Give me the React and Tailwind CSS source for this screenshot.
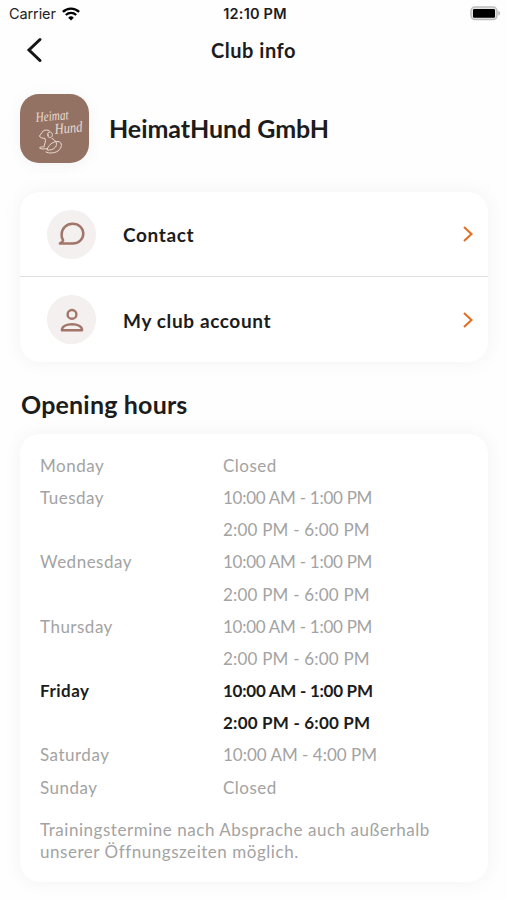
const hours = [
  { day: "Monday", times: ["Closed"] },
  { day: "Tuesday", times: ["10:00 AM - 1:00 PM", "2:00 PM - 6:00 PM"] },
  { day: "Wednesday", times: ["10:00 AM - 1:00 PM", "2:00 PM - 6:00 PM"] },
  { day: "Thursday", times: ["10:00 AM - 1:00 PM", "2:00 PM - 6:00 PM"] },
  { day: "Friday", times: ["10:00 AM - 1:00 PM", "2:00 PM - 6:00 PM"], today: true },
  { day: "Saturday", times: ["10:00 AM - 4:00 PM"] },
  { day: "Sunday", times: ["Closed"] },
];

const tracking = (time) => {
  if (time === "Closed") return "tracking-[0.5px]";
  if (time.includes("- 1:")) return "tracking-[-0.27px]";
  if (time.startsWith("10")) return "tracking-normal";
  return "tracking-[0.2px]";
};

const WifiIcon = () => (
  <svg width="18" height="14" viewBox="0 0 18 14" fill="none" stroke="#000">
    <path d="M0.9 4.9a11.6 11.6 0 0 1 16.2 0" strokeWidth="2.4" />
    <path d="M3.8 8a7.5 7.5 0 0 1 10.4 0" strokeWidth="2.3" />
    <path d="M9 13.6 6.2 10.7a4 4 0 0 1 5.6 0z" fill="#000" stroke="none" />
  </svg>
);

const BatteryIcon = () => (
  <svg width="31" height="15" viewBox="0 0 31 15">
    <rect x="1" y="1" width="26" height="12.6" rx="4" fill="#e4e4e4" stroke="#bdbdbd" strokeWidth="1.5" />
    <rect x="3" y="3" width="22" height="8.8" rx="1.2" fill="#000" />
    <path d="M28.4 5c2.2.7 2.2 3.9 0 4.6z" fill="#b5b5b5" />
  </svg>
);

const ClubLogo = () => (
  <svg width="69" height="69" viewBox="0 0 69 69" className="rounded-[19px] bg-[#937264]">
    <g fill="#eadbd0" fontFamily="Liberation Serif, serif" fontStyle="italic">
      <text x="16" y="28" fontSize="14" textLength="33" lengthAdjust="spacingAndGlyphs" transform="rotate(-5 16 28)">
        Heimat
      </text>
      <text x="35" y="40" fontSize="15" textLength="28" lengthAdjust="spacingAndGlyphs" transform="rotate(-5 35 40)">
        Hund
      </text>
    </g>
    <g fill="none" stroke="#eadbd0" strokeWidth="1" strokeLinecap="round" strokeLinejoin="round">
      <path d="M28 41.5c-1-2 0-4 2.500-3.500 2.500.6 2.500 5 0 5.500-2 .3-3-1-2.500-3M29 36.500c-3-1-6-.5-7 2-.6 1.500-2 2-2.500 3.500.5 2 3 2 5.500 2.500 1.500 3-1 6-1 8.500-1.500 0-4-.5-4.500 1 2 1.500 5 1 8 .5" />
      <path d="M32 44.500c3.500 1.500 6 5 3.500 8.500-2 2.500-5.500 3.500-8.500 3 1-4.500 6-9 11-8.500 5 .7 4 6.500 0 9.500-4 2.500-9 2.500-12 1" />
    </g>
  </svg>
);

const ContactIcon = () => (
  <svg width="28" height="26" viewBox="0 0 28 26" fill="none" stroke="#a17569" strokeWidth="2.5" strokeLinejoin="round">
    <path d="M1.900 22.500c1.800-.8 3-2 3.200-3.300a10 9.500 0 0 1-1.500-5.500c0-6.200 4.900-10.900 11-10.900s10.700 4.200 10.700 9.800-4.600 9.900-10.700 9.900z" />
  </svg>
);

const AccountIcon = () => (
  <svg width="26" height="26" viewBox="0 0 26 26" fill="none" stroke="#a17569" strokeWidth="2.4">
    <circle cx="13" cy="7.4" r="4.4" />
    <path d="M2.900 23.200c0-4 4.600-5.900 10.100-5.900s10.100 1.900 10.100 5.900z" strokeLinejoin="round" />
  </svg>
);

const MenuRow = ({ icon, label }) => (
  <button className="flex h-[85px] w-full items-center pr-[14px] pl-[27px] text-left">
    <span className="flex size-[49px] items-center justify-center rounded-full bg-[#f3f0ef]">
      {icon}
    </span>
    <span className="ml-[27px] flex-1 pt-[3px] text-[19px] font-bold tracking-[0.62px]">
      {label}
    </span>
    <svg width="12" height="18" viewBox="0 0 12 18" fill="none" stroke="#df7026" strokeWidth="2.1">
      <path d="M2 2l7.5 7L2 16" />
    </svg>
  </button>
);

const App = () => {
  return (
    <div className="flex h-[900px] w-full flex-col overflow-hidden bg-[#fefefe] font-[Lato,sans-serif] text-[#1c1c1c]">
      <div className="grid h-[27px] grid-cols-3 items-center pr-[6px] pl-[9px] font-[Inter,sans-serif]">
        <div className="flex items-center gap-[6px] text-[14.5px] tracking-[-0.1px] text-[#222]">
          Carrier
          <WifiIcon />
        </div>
        <div className="text-center text-[14.5px] font-semibold tracking-[0.2px] whitespace-nowrap">
          12:10 PM
        </div>
        <div className="flex justify-end">
          <BatteryIcon />
        </div>
      </div>

      <div className="mt-px grid h-11 grid-cols-3 items-center">
        <button className="pl-[26px]">
          <svg width="18" height="26" viewBox="0 0 18 26" fill="none" stroke="#161616" strokeWidth="3" strokeLinecap="round">
            <path d="M14 2.5 3 13l11 10.5" />
          </svg>
        </button>
        <h1 className="text-center text-[20px] font-bold tracking-[0.55px]">Club info</h1>
      </div>

      <div className="mt-[22px] ml-5 flex items-center gap-5">
        <div className="rounded-[19px] shadow-[0_2px_16px_rgba(0,0,0,0.05)]">
          <ClubLogo />
        </div>
        <h2 className="text-[25px] font-bold tracking-[-0.05px]">HeimatHund GmbH</h2>
      </div>

      <div className="mt-[29px] mr-[19px] ml-5 divide-y divide-[#e0e0e0] rounded-[20px] bg-white shadow-[0_0_20px_rgba(0,0,0,0.05)]">
        <MenuRow icon={<ContactIcon />} label="Contact" />
        <MenuRow icon={<AccountIcon />} label="My club account" />
      </div>

      <h2 className="mt-[25px] ml-[21px] text-[25px] leading-[34px] font-bold tracking-[0.18px]">
        Opening hours
      </h2>

      <div className="mt-[13px] mr-[19px] ml-5 h-[448px] rounded-[20px] bg-white px-5 pt-[16px] text-[17px] text-[#a3a3a3] shadow-[0_0_20px_rgba(0,0,0,0.05)]">
        {hours.map((item) => (
          <div key={item.day} className={item.today ? "flex font-bold text-[#1c1c1c]" : "flex"}>
            <div className="w-[183px] leading-[32.15px] tracking-[0.5px]">{item.day}</div>
            <div className="leading-[32.15px]">
              {item.times.map((time) => (
                <div key={time} className={tracking(time)}>
                  {time}
                </div>
              ))}
            </div>
          </div>
        ))}
        <p className="mt-[15px] leading-[22px] tracking-[0.54px]">
          Trainingstermine nach Absprache auch außerhalb
          <br />
          unserer Öffnungszeiten möglich.
        </p>
      </div>
    </div>
  );
};

export default App;
